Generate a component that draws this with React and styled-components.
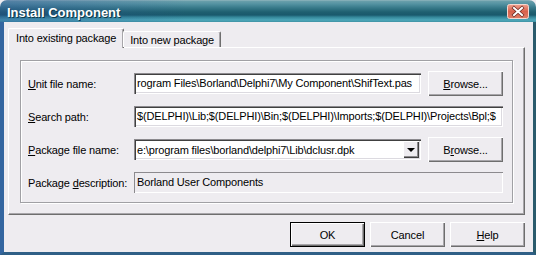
import styled, { createGlobalStyle } from "styled-components"

const GlobalStyle = createGlobalStyle`
  html, body {
    margin: 0;
    padding: 0;
    overflow: hidden;
    background: #eeecf0;
  }
  body {
    font-family: "Liberation Sans", Arial, sans-serif;
    font-size: 11px;
    letter-spacing: -0.15px;
    color: #000;
  }
`

export default function App() {
    return (
        <Window>
            <GlobalStyle />
            <TitleBar>
                <Title>Install Component</Title>
                <CloseButton aria-label="Close">
                    <svg width="22" height="15" viewBox="0 0 22 15">
                        <defs>
                            <linearGradient id="cl" x1="0" y1="0" x2="0" y2="1">
                                <stop offset="0" stopColor="#eea18f" />
                                <stop offset="0.5" stopColor="#d8614c" />
                                <stop offset="1" stopColor="#e07d66" />
                            </linearGradient>
                        </defs>
                        <rect x="0.5" y="0.5" width="21" height="14" rx="2" fill="url(#cl)" stroke="#f4d8d0" />
                        <path d="M7 4 L15 11 M15 4 L7 11" stroke="#6b2a22" strokeWidth="3.4" strokeLinecap="square" />
                        <path d="M7 4 L15 11 M15 4 L7 11" stroke="#fff" strokeWidth="2" strokeLinecap="square" />
                    </svg>
                </CloseButton>
            </TitleBar>
            <Body>
                <TabRow>
                    <Tab $active>Into existing package</Tab>
                    <Tab>Into new package</Tab>
                </TabRow>
                <TabPage>
                    <GroupBox>
                        <Label><u>U</u>nit file name:</Label>
                        <Edit>rogram Files\Borland\Delphi7\My Component\ShifText.pas</Edit>
                        <Button><u>B</u>rowse...</Button>

                        <Label><u>S</u>earch path:</Label>
                        <Edit $span={2}>$(DELPHI)\Lib;$(DELPHI)\Bin;$(DELPHI)\Imports;$(DELPHI)\Projects\Bpl;$</Edit>

                        <Label><u>P</u>ackage file name:</Label>
                        <Combo>
                            <ComboText>e:\program files\borland\delphi7\Lib\dclusr.dpk</ComboText>
                            <DropButton><Arrow /></DropButton>
                        </Combo>
                        <Button>B<u>r</u>owse...</Button>

                        <Label>Package <u>d</u>escription:</Label>
                        <Edit $span={2} $disabled>Borland User Components</Edit>
                    </GroupBox>
                </TabPage>
                <ButtonRow>
                    <Button $default>OK</Button>
                    <Button>Cancel</Button>
                    <Button><u>H</u>elp</Button>
                </ButtonRow>
            </Body>
        </Window>
    )
}

const Window = styled.div`
    width: 536px;
    height: 255px;
    display: flex;
    flex-direction: column;
    background: #eeecf0;
`

const TitleBar = styled.div`
    height: 22px;
    flex: none;
    display: flex;
    align-items: center;
    justify-content: space-between;
    padding: 0 7px;
    box-sizing: border-box;
    border-radius: 7px 7px 0 0;
    background:
        linear-gradient(90deg, rgba(40, 70, 150, 0.35), rgba(40, 70, 150, 0) 35%),
        linear-gradient(180deg,
            #9cbcc3 0px, #6a9fab 1px, #5392a1 4px, #367888 8px,
            #1f6070 12px, #1a596c 15px, #338597 17px, #4ea8ba 20px, #3e92a4 22px);
`

const Title = styled.span`
    color: #fff;
    font-weight: bold;
    font-size: 13px;
    letter-spacing: 0;
    padding-top: 3px;
    text-shadow: 1px 1px 0 #0d3a48;
`

const CloseButton = styled.div`
    width: 22px;
    height: 15px;
    display: flex;
`

const Body = styled.div`
    flex: 1;
    display: flex;
    flex-direction: column;
    padding: 6px 8px 0 4px;
    border-left: 4px solid #3466a0;
    border-right: 3px solid #2a5b6c;
    border-bottom: 3px solid #2f5f86;
`

const TabRow = styled.div`
    display: flex;
    align-items: flex-end;
    height: 19px;
    position: relative;
    z-index: 1;
`

const Tab = styled.div`
    display: flex;
    align-items: center;
    justify-content: center;
    box-sizing: border-box;
    background: #eeecf0;
    border-top: 1px solid #fff;
    border-left: 1px solid #fff;
    border-right: 1px solid #6e6e6e;
    box-shadow: inset -1px 0 0 #a8a6aa;
    border-radius: 2px 2px 0 0;
    white-space: nowrap;
    height: ${p => (p.$active ? "20px" : "16px")};
    margin-bottom: ${p => (p.$active ? "-1px" : "0")};
    padding: ${p => (p.$active ? "0 7px 2px" : "0 6px 0")};
    margin-left: ${p => (p.$active ? "0" : "-1px")};
`

const TabPage = styled.div`
    height: 168px;
    box-sizing: border-box;
    display: flex;
    padding: 12px 11px 11px;
    border: 1px solid;
    border-color: #fff #6e6e6e #6e6e6e #fff;
    box-shadow: inset -1px -1px 0 #a8a6aa;
`

const GroupBox = styled.div`
    flex: 1;
    display: grid;
    grid-template-columns: 99px 287px 75px;
    grid-auto-rows: 25px;
    column-gap: 7px;
    row-gap: 8px;
    align-items: center;
    align-content: start;
    padding: 10px 7px 0;
    border: 1px solid #a0a0a4;
    box-shadow: 1px 1px 0 #fff, inset 1px 1px 0 #fff;
`

const Label = styled.span`
    white-space: nowrap;
`

const Edit = styled.div`
    grid-column: span ${p => p.$span || 1};
    height: 21px;
    box-sizing: border-box;
    padding: 0 3px;
    line-height: 21px;
    white-space: nowrap;
    overflow: hidden;
    background: ${p => (p.$disabled ? "#eeecf0" : "#fff")};
    box-shadow: ${p => (p.$disabled
        ? "inset 1px 1px 0 #8c8a8e, inset -1px -1px 0 #fff"
        : "inset 1px 1px 0 #8c8a8e, inset 2px 2px 0 #404040, inset -1px -1px 0 #fff, inset -2px -2px 0 #dcdae0")};
`

const Combo = styled.div`
    height: 21px;
    box-sizing: border-box;
    display: flex;
    align-items: center;
    padding: 2px;
    background: #fff;
    box-shadow: inset 1px 1px 0 #8c8a8e, inset 2px 2px 0 #404040, inset -1px -1px 0 #fff, inset -2px -2px 0 #dcdae0;
`

const ComboText = styled.span`
    flex: 1;
    padding-left: 1px;
    white-space: nowrap;
    overflow: hidden;
`

const DropButton = styled.div`
    width: 16px;
    height: 17px;
    box-sizing: border-box;
    display: flex;
    align-items: center;
    justify-content: center;
    background: #eeecf0;
    box-shadow: inset 1px 1px 0 #fff, inset -1px -1px 0 #404040, inset -2px -2px 0 #8c8a8e;
`

const Arrow = styled.span`
    width: 0;
    height: 0;
    border-left: 4px solid transparent;
    border-right: 4px solid transparent;
    border-top: 4px solid #000;
    margin-top: 1px;
`

const ButtonRow = styled.div`
    display: flex;
    justify-content: flex-end;
    gap: 5px;
    margin-top: 7px;
`

const Button = styled.div`
    width: 75px;
    height: 25px;
    box-sizing: border-box;
    display: flex;
    align-items: center;
    justify-content: center;
    background: #eeecf0;
    border: ${p => (p.$default ? "1px solid #000" : "none")};
    box-shadow: inset 1px 1px 0 #fff, inset -1px -1px 0 #6e6e6e, inset -2px -2px 0 #a8a6aa;
`
